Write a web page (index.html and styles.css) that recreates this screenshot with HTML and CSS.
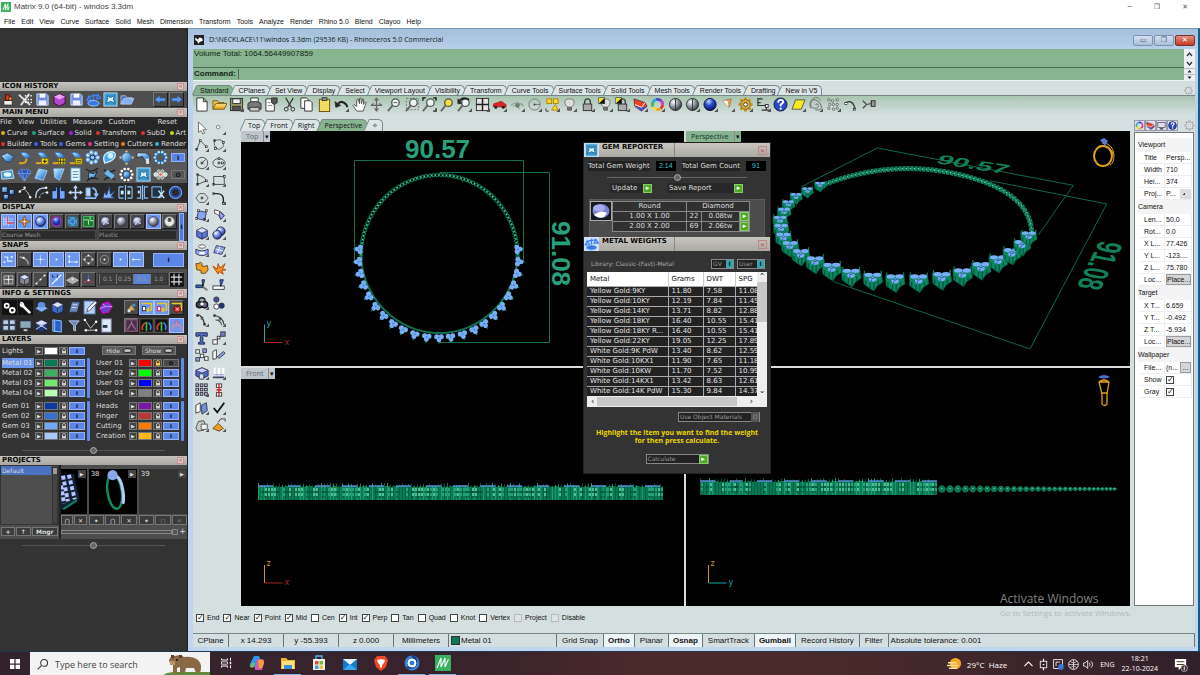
FILE: index.html
```html
<!DOCTYPE html>
<html lang="en">
<head>
<meta charset="utf-8">
<title>Matrix 9.0 (64-bit) - windos 3.3dm</title>
<link rel="stylesheet" href="styles.css">
</head>
<body>
<svg class="defs" aria-hidden="true">
  <defs>
    <radialGradient id="gb" cx=".35" cy=".3" r=".8"><stop offset="0" stop-color="#fff"/><stop offset=".4" stop-color="#7a9cf0"/><stop offset="1" stop-color="#0a1a70"/></radialGradient>
    <radialGradient id="gg" cx=".35" cy=".3" r=".8"><stop offset="0" stop-color="#fff"/><stop offset=".5" stop-color="#8a90a0"/><stop offset="1" stop-color="#222"/></radialGradient>
    <radialGradient id="gd" cx=".4" cy=".25" r=".8"><stop offset="0" stop-color="#c8d8ff"/><stop offset=".4" stop-color="#2c50d0"/><stop offset="1" stop-color="#000a50"/></radialGradient>
    <linearGradient id="gc" x1="0" y1="0" x2="1" y2="1"><stop offset="0" stop-color="#d8f0ff"/><stop offset=".5" stop-color="#6aaee8"/><stop offset="1" stop-color="#2458a0"/></linearGradient>
    <linearGradient id="gy" x1="0" y1="0" x2="0" y2="1"><stop offset="0" stop-color="#ffe890"/><stop offset="1" stop-color="#e0a010"/></linearGradient>
  </defs>
</svg>

<header class="app-title">
  <svg class="app-logo" viewBox="0 0 16 16"><rect width="16" height="16" fill="#3cae5c"/><path d="M3 13L7 3v10l4-10v10l2-5" fill="none" stroke="#fff" stroke-width="1.5"/></svg>
  <h1>Matrix 9.0 (64-bit) - windos 3.3dm</h1>
  <div class="win-controls"><button aria-label="Minimize">─</button><button aria-label="Restore">❐</button><button aria-label="Close">✕</button></div>
</header>
<nav class="menubar">
  <button>File</button><button>Edit</button><button>View</button><button>Curve</button><button>Surface</button><button>Solid</button><button>Mesh</button><button>Dimension</button><button>Transform</button><button>Tools</button><button>Analyze</button><button>Render</button><button>Rhino 5.0</button><button>Blend</button><button>Clayoo</button><button>Help</button>
</nav>

<main class="desktop">
  <aside class="matrix">
    <section>
      <h2>ICON HISTORY<button aria-label="Close Icon History">✕</button></h2>
      <div class="row history"><div class="icons" data-icons="stamp wrench2 floppy gembox floppy scale gemsheet folderb"></div><div class="icons arrows" data-icons="left+ right+"></div></div>
    </section>
    <section>
      <h2>MAIN MENU<button aria-label="Close Main Menu">✕</button></h2>
      <nav class="mm-menu"><button>File</button><button>View</button><button>Utilities</button><button>Measure</button><button>Custom</button><button>Reset</button></nav>
      <nav class="cats"><button class="c-gold">Curve</button><button class="c-teal">Surface</button><button class="c-purple">Solid</button><button class="c-red">Transform</button><button class="c-red">SubD</button><button class="c-lime">Art</button></nav>
      <nav class="cats"><button class="c-red">Builder</button><button class="c-blue">Tools</button><button class="c-blue">Gems</button><button class="c-pink">Setting</button><button class="c-orange">Cutters</button><button class="c-cyan">Render</button></nav>
      <div class="tool-block">
        <div class="row"><div class="icons spread" data-icons="disc swirl swirladd swirlhash swirllist gems pear gemc drill ring"></div><button class="tog">I</button></div>
        <div class="row"><div class="icons spread" data-icons="gemplate gemfacet plane plane2 sheet cup rail halo gemsheet cluster"></div><button class="tog off">O</button></div>
      </div>
      <div class="icons spread tool-dark" data-icons="boxes arcd bend mirror move rotate burst align align2 cutb torus"></div>
    </section>
    <section>
      <h2>DISPLAY<button aria-label="Close Display">✕</button></h2>
      <div class="display">
        <div>
          <div class="icons boxed" data-icons="grid! compass! ball! ballp+ swirlb+ circuit+"></div>
          <select aria-label="Mesh quality"><option>Coarse Mesh</option></select>
        </div>
        <div>
          <div class="icons boxed" data-icons="chk+ grayball+ chk+ grayball! silver+"></div>
          <select aria-label="Material"><option>Plastic</option></select>
        </div>
        <button class="tog tall">I</button>
      </div>
    </section>
    <section>
      <h2>SNAPS<button aria-label="Close Snaps">✕</button></h2>
      <div class="row snaps"><div class="icons boxed" data-icons="s1! s2+ s3! s4! s5! s6+ s7+ s4! s8!"></div><button class="tog wide">I</button></div>
      <div class="row snaps second"><div class="icons boxed" data-icons="window+ cube+ s9+"></div><div class="icons boxed" data-icons="deg! layer+ axes+"></div><div class="steps"><button>0.1</button><button>0.25</button><button class="on">0.5</button><button>1.0</button></div><div class="icons boxed" data-icons="hash+"></div></div>
    </section>
    <section>
      <h2>INFO &amp; SETTINGS<button aria-label="Close Info and Settings">✕</button></h2>
      <div class="row info"><div class="icons spread" data-icons="gears wrench platform cubeb scroll pencil hexp"></div><div class="icons boxed" data-icons="scene+ viewy! viewy2! viewx+"></div></div>
      <div class="row info"><div class="icons spread" data-icons="win4 monitor cage book funnel nodes notes"></div><div class="icons boxed" data-icons="g1+ g2 g2 g3!"></div></div>
    </section>
    <section>
      <h2>LAYERS<button aria-label="Close Layers">✕</button></h2>
      <div class="layers" id="layers"></div>
      <div class="grip"><span></span></div>
    </section>
    <section>
      <h2>PROJECTS<button aria-label="Close Projects">✕</button></h2>
      <div class="projects">
        <div class="plist"><div class="plist-box"><span>Default</span><i></i></div><div class="pbtns"><button>+</button><button>↑</button><button class="mngr">Mngr</button></div></div>
        <div class="thumbs">
          <div class="thumb-row">
            <figure class="cut"><div class="pic"><button aria-label="Open project 37">▶</button><svg viewBox="0 0 26 44"><path d="M0 6l13-2 6 26-13 10H0z" fill="#123"/><g stroke="#b8c4ff" stroke-width="4" stroke-dasharray="4 2"><path d="M2 6l5 26M8 5l6 25M0 16l3 18"/></g><path d="M2 40l14-9" stroke="#108060" stroke-width="2"/></svg></div><div class="tb"><button>⋂</button><button>✕</button></div></figure>
            <figure><div class="pic"><b>38</b><button aria-label="Open project 38">▶</button><svg viewBox="0 0 47 44"><ellipse cx="25" cy="22" rx="7" ry="17" fill="none" stroke="#118866" stroke-width="2.4" transform="rotate(-8 25 22)"/><path d="M21 7q8-3 11 9t1 18" fill="none" stroke="#b8c8f8" stroke-width="3"/><circle cx="23" cy="6" r="5" fill="#8aa8e8"/></svg></div><div class="tb"><button>✦</button><button>⋂</button><button>✕</button></div></figure>
            <figure><div class="pic empty"><b>39</b><button aria-label="Open project 39">▶</button></div><div class="tb"><button>✦</button><button class="dim">⋂</button><button class="dim">✕</button></div></figure>
          </div>
          <div class="slide"><i></i><button>+</button></div>
        </div>
      </div>
      <div class="grip"><span></span></div>
    </section>
  </aside>

  <section class="rhino">
    <header class="r-title">
      <svg viewBox="0 0 16 16"><rect width="16" height="16" fill="#222"/><path d="M2 4l4 3 3-3 4 1 1 4-5 2-2 3-2-4-3-2z" fill="#fff"/></svg>
      <h2>D:\NECKLACE\11\windos 3.3dm (29536 KB) - Rhinoceros 5.0 Commercial</h2>
      <div class="r-controls"><button aria-label="Minimize window">▭</button><button aria-label="Restore window">❐</button><button class="x" aria-label="Close window">✕</button></div>
    </header>
    <div class="command">
      <div class="cmd-body"><output>Volume Total: 1064.56449907859</output><label>Command:<input type="text" aria-label="Command"></label></div>
      <svg class="cmd-scroll" viewBox="0 0 11 31"><path d="M3 7l2.500-3L8 7M3 13l2.500 3L8 13" fill="none" stroke="#333" stroke-width="1.300"/><path d="M0 19.500h11M0 25.500h11" stroke="#bbb"/><path d="M3.500 23.500h4l-2-2.500zM3.500 27.500h4l-2 2.500z" fill="#222"/></svg>
    </div>
    <nav class="tabs"><button class="on">Standard</button><button>CPlanes</button><button>Set View</button><button>Display</button><button>Select</button><button>Viewport Layout</button><button>Visibility</button><button>Transform</button><button>Curve Tools</button><button>Surface Tools</button><button>Solid Tools</button><button>Mesh Tools</button><button>Render Tools</button><button>Drafting</button><button>New in V5</button><span class="gear" data-icons="cog"></span></nav>
    <div class="toolbar"><div class="icons" data-icons="new open save* print props cut copy paste undo* hand pan zoom zoomwin zoomext* zoomsel undoview* four* car* plan* circ* objs* bulb* lock* bulb2* lock2* wedge* wheel* sph sph* ballr* cone* gear* dim* help yellow* spiral* pts* curve fish"></div></div>
    <div class="work">
      <div class="strip icons" data-icons="cursor point* poly* spl* circle* ellipse* arc* rect* hexa* fillet* srf* srf2* boxt* sphs* cyl* patch* puzzle burstt trim split bool* dots ext* ext2* text ptsx* blocks flow bx* sub* array* gaug panels* check* solid2* render*"></div>
      <div class="view-col">
        <nav class="tabs vtabs"><button>Top</button><button>Front</button><button>Right</button><button class="on">Perspective</button><button>✧</button></nav>
        <div class="views">
          <div class="view"><div class="vlabel"><span>Top</span><button aria-label="Top view menu">▾</button></div><svg id="vTop" viewBox="241 131 443 235"></svg></div>
          <div class="view"><div class="vlabel on"><span>Perspective</span><button aria-label="Perspective view menu">▾</button></div><svg id="vPersp" viewBox="686 131 444 235"></svg></div>
          <div class="view"><div class="vlabel"><span>Front</span><button aria-label="Front view menu">▾</button></div><svg id="vFront" viewBox="241 367 443 238"></svg></div>
          <div class="view"><svg id="vRight" viewBox="686 367 444 238"></svg></div>

          <div class="floats">
            <section class="fw">
              <header><span class="fi" data-icons="gemsheet"></span><h3>GEM REPORTER</h3><button aria-label="Close Gem Reporter">✕</button></header>
              <div class="gem-body">
                <div class="totals"><span>Total Gem Weight</span><b>2.14</b><span>Total Gem Count</span><b>91</b></div>
                <div class="fgrip"><span></span></div>
                <div class="acts"><button>Update<i>▸</i></button><button>Save Report<i>▸</i></button></div>
                <div class="gem-card">
                  <svg viewBox="0 0 22 20"><rect x=".5" y=".5" width="21" height="19" fill="#181820" stroke="#aaa"/><ellipse cx="11" cy="10" rx="8.500" ry="7" fill="#7a84d0"/><ellipse cx="9" cy="7" rx="6" ry="3.500" fill="#a8acf0"/><path d="M4 14q7-6 13-2l-3 4q-5 2-10-2z" fill="#fff"/></svg>
                  <table><thead><tr><th>Round</th><th colspan="3">Diamond</th></tr></thead>
                  <tbody><tr><td>1.00 X 1.00</td><td>22</td><td>0.08tw</td><td class="go"><button aria-label="Show 1.00">▸</button></td></tr><tr><td>2.00 X 2.00</td><td>69</td><td>2.06tw</td><td class="go"><button aria-label="Show 2.00">▸</button></td></tr></tbody></table>
                </div>
              </div>
            </section>
            <section class="fw">
              <header><span class="fi" data-icons="scale"></span><h3>METAL WEIGHTS</h3><button aria-label="Close Metal Weights">✕</button></header>
              <div class="metal-body">
                <div class="lib"><span>Library: Classic-(Fast)-Metal</span><button>GV<i>I</i></button><button>User<i>I</i></button></div>
                <div class="mt-box">
                  <div class="mt-clip"><table class="mt"><thead><tr><th>Metal</th><th>Grams</th><th>DWT</th><th>SPG</th></tr></thead><tbody id="metals"></tbody></table></div>
                  <div class="vs"><span>⌃</span><i></i><span>⌄</span></div>
                  <div class="hs"><span>‹</span><i></i><span>›</span></div>
                </div>
                <button class="uom">Use Object Materials<i>O</i></button>
                <p>Highlight the item you want to find the weight<br>for then press calculate.</p>
                <button class="calc">Calculate<i>▸</i></button>
              </div>
            </section>
          </div>
        </div>
      </div>
      <aside class="side">
        <div class="side-tabs"><div class="icons" data-icons="wheel wedge screen help"></div><span class="gear" data-icons="cog"></span></div>
        <form class="props">
          <h4>Viewport</h4>
          <dl><dt>Title</dt><dd>Persp...</dd><dt>Width</dt><dd>710</dd><dt>Hei...</dt><dd>374</dd><dt>Proj...</dt><dd><select aria-label="Projection"><option>P...</option></select></dd></dl>
          <h4>Camera</h4>
          <dl><dt>Len...</dt><dd>50.0</dd><dt>Rot...</dt><dd>0.0</dd><dt>X L...</dt><dd>77.426</dd><dt>Y L...</dt><dd>-123....</dd><dt>Z L...</dt><dd>75.780</dd><dt>Loc...</dt><dd><button type="button">Place...</button></dd></dl>
          <h4>Target</h4>
          <dl><dt>X T...</dt><dd>6.659</dd><dt>Y T...</dt><dd>-0.492</dd><dt>Z T...</dt><dd>-5.934</dd><dt>Loc...</dt><dd><button type="button">Place...</button></dd></dl>
          <h4>Wallpaper</h4>
          <dl><dt>File...</dt><dd class="file">(n... <button type="button">...</button></dd><dt><label for="wshow">Show</label></dt><dd><input type="checkbox" id="wshow" checked></dd><dt><label for="wgray">Gray</label></dt><dd><input type="checkbox" id="wgray" checked></dd></dl>
        </form>
      </aside>
    </div>
    <div class="osnap">
      <label><input type="checkbox" checked>End</label><label><input type="checkbox" checked>Near</label><label><input type="checkbox" checked>Point</label><label><input type="checkbox" checked>Mid</label><label><input type="checkbox">Cen</label><label><input type="checkbox" checked>Int</label><label><input type="checkbox" checked>Perp</label><label><input type="checkbox">Tan</label><label><input type="checkbox">Quad</label><label><input type="checkbox">Knot</label><label><input type="checkbox">Vertex</label><label><input type="checkbox" disabled>Project</label><label><input type="checkbox" disabled>Disable</label>
    </div>
    <footer class="status">
      <button class="w35">CPlane</button><span class="w55">x 14.293</span><span class="w55">y -55.393</span><span class="w55">z 0.000</span><span class="w55">Millimeters</span><span class="lay"><i></i>Metal 01</span><button>Grid Snap</button><button class="on">Ortho</button><button>Planar</button><button class="on">Osnap</button><button>SmartTrack</button><button class="on">Gumball</button><button>Record History</button><button>Filter</button><span class="tol">Absolute tolerance: 0.001</span>
    </footer>
    <div class="watermark"><strong>Activate Windows</strong><span>Go to Settings to activate Windows.</span></div>
  </section>
</main>

<footer class="taskbar">
  <button class="start" aria-label="Start" data-icons="winlogo"></button>
  <label class="search"><span data-icons="mag"></span><input type="text" placeholder="Type here to search" aria-label="Search">
    <svg viewBox="0 0 48 24"><path d="M0 24q4-4 14-4h34v4z" fill="#5e8c3a"/><path d="M8 6q2-3 5-2 6-2 9 1 8-1 14 3 5 5 2 13h-4l-2-5h-8l-1 5h-5v-6l-3 1v5h-4v-8q-6-3-3-7z" fill="#8a6a44"/><path d="M9 3h3v3H9zM17 3h3v3h-3z" fill="#5a4028"/><path d="M8 9h5v4H8z" fill="#b89468"/><circle cx="15" cy="8" r="1" fill="#111"/></svg></label>
  <nav class="apps">
    <button aria-label="Task view" data-icons="taskview"></button><button aria-label="Copilot" data-icons="copilot"></button><button class="run" aria-label="File Explorer" data-icons="explorer"></button><button aria-label="Store" data-icons="store"></button><button aria-label="Mail" data-icons="mail"></button><button aria-label="Brave" data-icons="brave"></button><button class="run" aria-label="Browser" data-icons="eye"></button><button class="run" aria-label="Matrix" data-icons="matrix"></button>
  </nav>
  <div class="tray"><span class="weather" data-icons="sun"></span><span class="temp">29°C&nbsp; Haze</span><div class="icons" data-icons="up meet cam globe vol"></div><span class="lang">ENG</span><time>18:21<br>22-10-2024</time><span class="note" data-icons="note"></span></div>
</footer>
<script src="app.js"></script>
</body>
</html>
```
FILE: styles.css
```css
* { box-sizing: border-box; }
body { margin: 0; min-height: 100vh; display: flex; flex-direction: column; font: 7px/10px "Liberation Sans", Arial, sans-serif; color: #111; background: #fff; overflow: hidden; }
button, input, select { font: inherit; color: inherit; border: 0; padding: 0; margin: 0; background: none; border-radius: 0; }
button { white-space: nowrap; }
h1, h2, h3, h4, p, dl, dd, figure { margin: 0; font-size: inherit; font-weight: normal; }
svg { display: block; }
.defs { position: absolute; width: 0; height: 0; }
.icons { display: flex; align-items: center; }
.ib { display: block; flex: none; width: 15px; height: 15px; }
.ib svg { width: 100%; height: 100%; }

/* application frame */
.app-title { display: flex; align-items: center; height: 14px; background: #fff; }
.app-logo { width: 10px; height: 10px; margin: 0 3px 0 1px; }
.app-title h1 { flex: 1; font: 8px/12px "Liberation Sans", sans-serif; color: #444; }
.win-controls { display: flex; gap: 22px; padding-right: 12px; color: #555; font: 7px/12px "DejaVu Sans", sans-serif; }
.menubar { display: flex; gap: 6px; height: 14px; padding: 1px 4px 0; }
.desktop { flex: 1; display: flex; min-height: 0; }

/* left panel */
.matrix { width: 188px; flex: none; background: #333; padding-top: 54px; border-right: 1px solid #222; color: #ddd; font: 7px/10px "DejaVu Sans", Verdana, sans-serif; }
.matrix h2 { display: flex; justify-content: space-between; align-items: center; height: 9px; padding: 0 3px 0 2px; background: linear-gradient(#c4c3bd, #a8a7a2); color: #080808; font-weight: bold; line-height: 9px; }
.matrix h2 button { width: 7px; height: 7px; border: 1px solid #c89090; background: #d6cfcb; color: #c44; font: 5px/5px "DejaVu Sans", sans-serif; }
.row { display: flex; align-items: center; justify-content: space-between; }
.history { height: 17px; background: #4d4d4d; padding: 0 3px 0 1px; }
.history > .icons:first-child { gap: 2px; }
.arrows { gap: 1px; }
.matrix .plus { background: #4a4a4a; border: 1px solid #777; border-right-color: #1c1c1c; border-bottom-color: #1c1c1c; }
.matrix .act { background: #6d97ee; border: 1px solid #a8c0f8; }
.mm-menu { display: flex; gap: 6px; height: 10px; background: #262626; }
.mm-menu button:last-child { margin: 0 10px 0 auto; }
.cats { display: flex; justify-content: space-between; height: 11px; padding: 0 1px; background: #262626; }
.cats button { display: flex; align-items: center; gap: 2px; color: #ddd; }
.cats button::before { content: ""; width: 4px; height: 4px; border-radius: 50%; }
.cats .c-gold::before { background: #d8b020; } .cats .c-teal::before { background: #20a080; } .cats .c-purple::before { background: #a020e0; }
.cats .c-red::before { background: #e03030; } .cats .c-lime::before { background: #c0d820; } .cats .c-blue::before { background: #4060f0; }
.cats .c-pink::before { background: #e03090; } .cats .c-orange::before { background: #e88020; } .cats .c-cyan::before { background: #30b8d0; }
.tool-block { background: #585858; padding: 0 2px 0 0; }
.tool-block .row { height: 17px; gap: 3px; }
.spread { flex: 1; justify-content: space-between; }
.tool-dark { height: 18px; background: #2a2a2a; padding: 0 4px 0 1px; margin-bottom: 2px; }
.tog { width: 14px; height: 9px; background: #5b86e6; border: 1px solid #93b2f5; color: #112; font: bold 6px/6px "DejaVu Sans", sans-serif; }
.tog.off { background: #555; border-color: #777; }
.display { display: flex; gap: 2px; height: 29px; padding: 1px 3px 0 1px; background: #444; }
.display > div:first-child { width: 95px; }
.display > div:nth-child(2) { flex: 1; }
.boxed { gap: 1px; }
.display .icons { justify-content: space-between; height: 17px; background: #333; }
.matrix select { display: block; width: 100%; height: 10px; appearance: none; background: #2c2c2c; border: 1px solid #484848; color: #999; font: 6px/8px "DejaVu Sans", sans-serif; }
.tog.tall { width: 10px; height: auto; background: #4e7de0; }
.snaps { height: 19px; padding: 0 3px 0 1px; }
.tog.wide { width: 31px; height: 14px; }
.snaps.second { height: 20px; background: #4d4d4d; }
.steps { display: flex; color: #999; font-size: 6px; border: 1px solid #333; }
.steps button { width: 17px; height: 10px; border-left: 1px solid #777; background: #3c3c3c; }
.steps .on { background: #5a84d8; }
.info { height: 18px; background: #2b2b2b; padding-right: 3px; }
.info + .info { height: 19px; }
.info .spread { padding: 0 10px 0 2px; }
.info .boxed { gap: 0; background: #555; }
.layers { display: grid; grid-template-columns: 88px 88px; column-gap: 6px; padding: 2px 2px 0; }
.lgroup { display: flex; gap: 2px; margin-bottom: 3px; }
.lgroup::after { content: ""; width: 3px; background: #5d8be8; border-radius: 1px; }
.lgroup.bare { margin-bottom: 2px; }
.lgroup.bare::after { visibility: hidden; }
.lgroup > div { flex: 1; }
.lrow { display: grid; grid-template-columns: 1fr 8px 14px 9px 16px; gap: 1px; height: 10px; align-items: center; white-space: nowrap; }
.lrow.sel > span { background: #6d97ee; }
.lrow button, .lrow b { height: 8px; border: 1px solid #777; background: #444; font: 5px/6px "DejaVu Sans", sans-serif; }
.lrow .lk { display: grid; place-items: center; color: #ccc; }
.lrow .lk.held { color: #fc3; }
.lk svg { width: 6px; height: 6px; }
.lrow .tg { background: #5b86e6; border-color: #93b2f5; color: #001; font-weight: bold; }
.lrow .tg.off { background: #4a4a4a; border-color: #777; }
.hideshow { display: flex; justify-content: space-between; padding: 0 8px 0 6px; }
.hideshow button { display: flex; align-items: center; gap: 3px; width: 34px; height: 9px; justify-content: center; background: #5a5a5a; border: 1px solid #777; font-size: 6px; }
.hideshow i { width: 9px; height: 5px; border-radius: 50%; background: #bbb; border: 1px solid #222; }
.grip { height: 12px; display: flex; align-items: center; padding: 0 22px; }
.grip::before, .grip::after { content: ""; flex: 1; height: 1px; background: #555; }
.grip span, .fgrip span { width: 7px; height: 7px; border-radius: 50%; border: 1px solid #aaa; background: #666; }
.projects { display: flex; height: 74px; background: #4d4d4d; }
.plist { width: 61px; border-right: 2px solid #222; }
.plist-box { position: relative; height: 60px; border: 1px solid #333; font-size: 6px; line-height: 9px; padding-right: 7px; }
.plist-box span { display: block; background: #4a72c0; padding-left: 1px; }
.plist-box i { position: absolute; right: 0; top: 1px; width: 6px; height: 57px; border: 1px solid #333; background: linear-gradient(#999 0 6px, #444 6px); }
.pbtns { display: flex; gap: 1px; padding: 2px 1px; }
.pbtns button { flex: 1; height: 9px; border: 1px solid #777; background: #3c3c3c; font: bold 6px/7px "DejaVu Sans", sans-serif; }
.pbtns .mngr { flex: 2; }
.thumbs { flex: 1; min-width: 0; padding-top: 4px; }
.thumb-row { display: flex; gap: 2px; }
.thumb-row figure { flex: 47; min-width: 0; overflow: hidden; }
.thumb-row .cut { flex: 25; }
.pic { position: relative; height: 45px; background: #000; }
.pic.empty { background: #333; }
.pic svg { width: 100%; height: 100%; }
.pic b { position: absolute; left: 2px; top: 0; font-weight: normal; }
.pic button { position: absolute; right: 1px; top: 1px; z-index: 1; width: 8px; height: 8px; background: #444; font-size: 5px; line-height: 7px; }
.tb { display: flex; gap: 1px; margin-top: 1px; }
.tb button { flex: 1; height: 10px; border: 1px solid #777; background: #3a3a3a; font-size: 6px; line-height: 7px; }
.tb .dim { color: #777; }
.slide { display: flex; align-items: center; height: 14px; }
.slide::before { content: ""; flex: 1; height: 2px; border: 1px solid #888; }
.slide i { width: 6px; height: 6px; background: #555; border: 1px solid #888; }
.slide button { width: 9px; font-size: 8px; }

/* modelling window */
.rhino { position: relative; flex: 1; min-width: 0; display: flex; flex-direction: column; padding: 0 3px 4px 5px; background: linear-gradient(#a3bfda, #b9cfea 20px, #bfd6ee); border-right: 2px solid #145a86; border-top: 1px solid #7898b4; }
.r-title { display: flex; align-items: center; gap: 5px; height: 20px; padding-top: 2px; }
.r-title svg { width: 10px; height: 10px; margin-left: 1px; }
.r-title h2 { flex: 1; font: 7px/12px "Open Sans", "Liberation Sans", sans-serif; color: #122; }
.r-controls { display: flex; gap: 1px; }
.r-controls button { width: 20px; height: 11px; border: 1px solid #7d92b0; border-radius: 2px; background: linear-gradient(#d4e0f0, #a9bfdb); font: 7px/9px "DejaVu Sans", sans-serif; color: #456; }
.r-controls .x { background: linear-gradient(#dc9080, #c43a28); color: #fff; border-color: #803028; }
.command { display: flex; border-bottom: 1px solid #eef4f2; font-size: 8px; }
.cmd-body { flex: 1; background: #85b48f; color: #132418; }
.cmd-body output { display: block; height: 19px; border-bottom: 1px solid #4a6a52; padding-left: 1px; }
.cmd-body label { display: flex; align-items: center; height: 12px; padding-left: 1px; font-weight: bold; }
.cmd-body input { width: 90%; height: 10px; margin-left: 2px; border-left: 1px solid #566; font-weight: normal; }
.cmd-scroll { width: 11px; height: 31px; background: #f0f2f2; }
.tabs { display: flex; align-items: flex-end; height: 15px; background: #d5dfe0; border-bottom: 1px solid #788; padding: 0 2px; }
.tabs button { position: relative; height: 10px; padding: 0 4px; margin-left: 1px; border: 1px solid #788; border-width: 1px 1px 0 0; border-radius: 2px 5px 0 0; line-height: 9px; background: #dde5e6; }
.tabs button::before { content: ""; position: absolute; left: -2px; top: 0; bottom: 0; width: 4px; border-left: 1px solid #788; transform: skewX(-24deg); background: inherit; }
.tabs .on { background: #85b48f; }
.gear { margin-left: auto; color: #888; }
.gear .ib { width: 9px; height: 9px; }
.toolbar { height: 19px; background: linear-gradient(#a9c5b0, #d5dfe0); padding: 0 1px; }
.toolbar .icons { max-width: 682px; height: 17px; justify-content: space-between; }
.work { flex: 1; display: flex; min-height: 0; background: #d5dfe0; }
.strip { flex: none; width: 48px; height: 315px; margin-top: 4px; padding: 0 13px 0 0; display: grid; grid-template-columns: 17px 18px; grid-template-rows: repeat(18, 1fr); }
.strip .ib { width: 14px; height: 14px; margin: auto; }
.view-col { flex: 1; min-width: 0; display: flex; flex-direction: column; }
.vtabs { height: 16px; font-family: "Open Sans", "Liberation Sans", sans-serif; border: 0; }
.vtabs button { height: 12px; line-height: 11px; padding: 0 4px; }
.views { position: relative; flex: 1; min-height: 0; display: grid; grid-template-columns: 443fr 444fr; grid-template-rows: 235fr 238fr; gap: 2px; background: #dadada; }
.view { position: relative; min-width: 0; min-height: 0; background: #000; }
.view > svg { width: 100%; height: 100%; }
.vlabel { position: absolute; left: 0; top: 0; display: flex; height: 11px; background: #bfc6ca; color: #667; font: 7px/11px "Open Sans", sans-serif; }
.vlabel span { padding: 0 5px; }
.vlabel button { width: 7px; border-left: 1px solid #889; color: #112; }
.vlabel.on { background: #85b48f; color: #133; }

/* floating tool windows */
.floats { position: absolute; left: 342px; top: 11px; width: 188px; background: #333; color: #ddd; font: 7px/10px "DejaVu Sans", Verdana, sans-serif; border: 1px solid #222; }
.fw header { display: flex; height: 14px; background: linear-gradient(#c8c6bf, #aaa8a2); color: #090909; }
.fi { width: 15px; height: 14px; background: #cfe2f4; }
.fi .ib { height: 14px; }
.fw h3 { width: 76px; padding-left: 3px; margin-right: auto; border-right: 1px solid #888; font-weight: bold; line-height: 9px; white-space: nowrap; }
.fw header button { width: 9px; height: 9px; margin: 3px 3px; border: 1px solid #b88; color: #c44; font-size: 6px; line-height: 6px; }
.gem-body { padding-top: 4px; }
.totals { display: flex; justify-content: space-between; padding: 0 4px; }
.totals span, .totals b { background: #222; white-space: nowrap; }
.totals b { width: 20px; background: #000; color: #30c8c8; text-align: center; font: 7px/10px "Liberation Sans", sans-serif; }
.fgrip { display: flex; align-items: center; height: 12px; padding: 0 23px; }
.fgrip::before, .fgrip::after { content: ""; flex: 1; height: 1px; background: #666; }
.acts { display: flex; gap: 15px; padding: 0 27px 6px 26px; }
.acts button { display: flex; justify-content: space-between; align-items: center; background: #282828; height: 10px; padding-left: 2px; width: 42px; }
.acts button:last-child { flex: 1; }
.acts i, .calc i, .go button { width: 9px; height: 9px; background: #4fa828; border: 1px solid #8c6; color: #fff; font: 7px/7px "DejaVu Sans", sans-serif; }
.gem-card { display: flex; margin: 0 5px; padding: 1px 14px 5px 0; background: #4c4c4c; border: 1px solid #5a5a5a; border-bottom: 0; }
.gem-card svg { width: 22px; height: 20px; flex: none; }
.gem-card table { flex: 1; border-collapse: collapse; text-align: center; }
.gem-card th, .gem-card td { height: 10px; padding: 0; border: 1px solid #888; font-weight: normal; line-height: 9px; background: #303030; }
.gem-card th:first-child { width: 74px; }
.gem-card .go { width: 10px; }
.go button { display: block; }
.metal-body { padding: 7px 3px 6px; height: 222px; display: flex; flex-direction: column; align-items: center; }
.lib { width: 100%; display: flex; gap: 3px; height: 12px; padding: 0 2px 0 4px; color: #aaa; font-size: 6px; align-items: center; }
.lib span { margin-right: auto; }
.lib button, .uom, .calc { display: flex; justify-content: space-between; align-items: center; width: 23px; height: 10px; border: 1px solid #888; background: #222; padding-left: 1px; font-size: 6px; color: #999; flex: none; }
.lib button:last-child { width: 28px; }
.lib i { width: 7px; background: #30a8b0; color: #011; font: bold 6px/8px "DejaVu Sans", sans-serif; text-align: center; }
.mt-box { width: 180px; margin-top: 2px; display: grid; grid-template-columns: 1fr 10px; background: #eee; color: #222; }
.mt-clip { overflow: hidden; height: 124px; min-width: 0; }
.mt { width: 180px; table-layout: fixed; border-collapse: collapse; }
.mt th { height: 14px; background: #fff; color: #111; border-right: 1px solid #ccc; text-align: left; font-weight: normal; padding: 0 3px; width: 35px; }
.mt th:first-child { width: 81px; }
.mt th:nth-child(3) { width: 32px; }
.mt th:nth-child(4) { width: 32px; }
.mt td { height: 10px; padding: 0 0 0 3px; background: #222; color: #e4e4e4; border: 1px solid #aaa; border-left: 0; line-height: 8px; white-space: nowrap; }
.vs, .hs { display: flex; text-align: center; font-size: 8px; }
.vs { flex-direction: column; }
.vs i { height: 40px; margin: 0 0 auto; background: #c8c8c8; }
.hs { height: 11px; align-items: center; padding: 0 4px; gap: 3px; }
.hs i { flex: 1; height: 9px; background: #c8c8c8; margin-right: 10px; }
.uom { width: 82px; margin: 5px 7px 0 0; align-self: flex-end; flex: none; }
.uom i { width: 8px; background: #555; }
.metal-body p { margin: 7px 0 9px; text-align: center; color: #ecd800; font: bold 7px/8px "Open Sans", sans-serif; white-space: nowrap; }
.calc { width: 63px; }

/* properties */
.side { flex: none; width: 65px; padding: 4px 0 0 4px; display: flex; flex-direction: column; }
.side-tabs { display: flex; align-items: center; height: 13px; }
.side-tabs .ib { width: 11px; height: 11px; background: #dde; border: 1px solid #99a; }
.side-tabs .gear .ib { background: none; border: 0; }
.props { flex: 1; margin-right: 1px; background: #fff; border: 1px solid #777; padding: 5px 1px 0 3px; overflow: hidden; }
.props h4 { height: 14px; line-height: 14px; background: #f4f4f4; }
.props dl { display: grid; grid-template-columns: 26px 1fr; padding-left: 1px; }
.props dt, .props dd { height: 12px; line-height: 12px; border-bottom: 1px solid #eee; border-right: 1px solid #eee; white-space: nowrap; }
.props dt { padding-left: 5px; }
.props dd { padding-left: 1px; }
.props dd > button { width: 100%; height: 11px; background: #d6d6d6; border: 1px solid #999; line-height: 9px; text-align: left; display: block; }
.props .file { display: flex; justify-content: space-between; }
.props .file button { width: 11px; text-align: center; }
.props select { width: 100%; appearance: none; background: linear-gradient(135deg, transparent 55%, #444 55%) right 6px center / 3px 3px no-repeat, linear-gradient(#ddd, #ddd) right / 11px 10px no-repeat; height: 11px; display: block; }
input[type=checkbox] { appearance: none; width: 8px; height: 8px; border: 1px solid #444; background: #fff; flex: none; font: bold 8px/7px "DejaVu Sans", sans-serif; display: inline-block; vertical-align: middle; overflow: hidden; }
input[type=checkbox]:checked::before { content: "✓"; display: block; line-height: 6px; }
input[type=checkbox]:disabled { border-color: #bbb; background: #dde4e5; }

/* snap and status bars */
.osnap { display: flex; gap: 4px; height: 27px; padding: 0 3px 4px; align-items: center; background: #d5dfe0; }
.osnap label { display: flex; align-items: center; gap: 3px; }
.status { display: flex; height: 14px; background: #d5dfe0; border-top: 1px solid #788; font-size: 8px; line-height: 13px; text-align: center; }
.status > * { border-right: 1px solid #677; padding: 0 5px; white-space: nowrap; }
.status .w35 { width: 36px; padding: 0 3px; } .status .w55 { width: 55px; }
.status .lay { display: flex; align-items: center; gap: 1px; width: 108px; padding: 0 2px; }
.lay i { width: 9px; height: 9px; background: #0a7a54; border: 1px solid #333; }
.status .on { font-weight: bold; background: #eef3f6; padding: 0 4px; }
.status .tol { flex: 1; text-align: left; padding-left: 2px; }
.watermark { position: absolute; right: 48px; bottom: 31px; width: 150px; font-family: "Open Sans", sans-serif; color: #b0b8ba; pointer-events: none; }
.watermark strong { display: block; font: 12px/15px "Open Sans", sans-serif; color: #838383; }
.watermark span { font-size: 8px; line-height: 14px; white-space: nowrap; }

/* taskbar */
.taskbar { display: flex; height: 25px; flex: none; background: linear-gradient(90deg, #33232c, #38232b 40%, #4c2a2b 54%, #492a2b 70%, #30202a); color: #fff; font: 8px/11px "Open Sans", sans-serif; border-top: 1px solid #1b3850; }
.start { width: 30px; display: grid; place-items: center; }
.start .ib { width: 10px; height: 10px; }
.search { width: 180px; display: flex; align-items: center; background: #f3f3f4; color: #444; padding-left: 6px; }
.search .ib { width: 13px; height: 13px; }
.search input { flex: 1; min-width: 0; margin-left: 6px; font-size: 9px; }
.search input::placeholder { color: #444; opacity: 1; }
.search > svg { width: 48px; height: 24px; flex: none; }
.apps { display: flex; }
.apps button { width: 31px; display: grid; place-items: center; border-bottom: 2px solid transparent; }
.apps .run { border-image: linear-gradient(90deg, transparent 10%, #76b9ed 10% 90%, transparent 90%) 1; }
.apps .ib { width: 16px; height: 16px; }
.apps button:first-child .ib { width: 12px; height: 12px; }
.tray { margin-left: auto; display: flex; align-items: center; gap: 5px; padding-right: 12px; }
.tray .icons { gap: 2px; margin-left: 10px; }
.tray .icons .ib { width: 13px; height: 13px; }
.tray time { margin: 0 10px 0 2px; font-size: 7px; line-height: 10px; text-align: center; }
.tray .lang { font-size: 7px; }
```
FILE: app.js
```js
const P = (d, f = 'none', s = '#333', w = 1) => `<path d="${d}" fill="${f}" stroke="${s}" stroke-width="${w}"/>`;
const C = (x, y, r, f = 'none', s = '#333', w = 1) => `<circle cx="${x}" cy="${y}" r="${r}" fill="${f}" stroke="${s}" stroke-width="${w}"/>`;
const R = (x, y, w, h, f = 'none', s = '#333') => `<rect x="${x}" y="${y}" width="${w}" height="${h}" fill="${f}" stroke="${s}"/>`;
const hs = pts => pts.map(([x, y]) => `<rect x="${x - 1}" y="${y - 1}" width="2" height="2" fill="#fff" stroke="#222" stroke-width=".8"/>`).join('');
const dots = (pts, f = '#e8f8ff') => pts.map(([x, y]) => C(x, y, 1.3, f, 'none')).join('');
const B = '#8aa4f0', N = 'none';
const ringDots = (n, r, q, f) => Array.from({ length: n }, (_, i) => C(8 + r * Math.cos(i * 6.283 / n), 8 + r * Math.sin(i * 6.283 / n), q, f, N)).join('');

const magnifier = C(9, 6, 4, '#eef4f4', '#555', 1.4) + P('M6 9L1 15', N, '#666', 2);
const page = P('M3 1h7l4 4v10H3zM10 1v4h4', '#fff');
const padlock = P('M5 8V5q0-3 3-3t3 3v3', N, '#444', 1.5) + R(3.5, 7.5, 9, 7, '#aaa');
const lamp = P('M6 11q-3-3-3-5 0-4 5-4t5 4q0 2-3 5z', '#ddd', '#777') + P('M6 11h4v3H6z', '#777', '#555');
const swirl = P('M2 14q8 1 8-4T6 6', N, '#e0a820', 2) + P('M4 3q6-2 10 4-5 5-10-4z', 'url(#gc)', '#2c70c0');
const cube = c => P('M2 5l6-3 6 3v7l-6 3-6-3z', c, '#224') + P('M2 5l6 3 6-3M8 8v7', N, '#335') + P('M2 5l6-3 6 3-6 3z', '#d8e4ff', '#335', .5);
const pane = P('M2 3h12v8H9', N, '#e8c828', 2) + P('M11 8l-3 3 3 3', N, '#e8c828', 1.5);

const ICONS = {
  new: page,
  open: P('M1 13V4h5l1 2h6v2', '#f0c850', '#7a5a10') + P('M1 13l3-6h12l-3 6z', 'url(#gy)', '#7a5a10'),
  save: R(1.5, 1.5, 13, 13, '#98986a') + R(4, 2, 8, 5, '#f4f4f4') + R(4, 10, 8, 4.5, '#555'),
  print: P('M4 7V1h8v6', '#fff') + P('M1 7l3-2h8l3 2v6H1z', '#777') + P('M3 11h10v4H3z', '#ccc'),
  props: P('M2 2h9v13H2z', '#fff') + P('M8 1h6v5l-3 2-3-2z', '#555') + P('M4 6h3M4 9h5', N, '#888'),
  cut: P('M4 1l6 10M12 1L6 11', N, '#333', 1.3) + C(4.5, 13, 2) + C(11.5, 13, 2),
  copy: P('M2 1h6l2 2v9H2z', '#fff') + P('M6 4h6l2 2v9H6z', '#fff'),
  paste: R(2.5, 2.5, 11, 13, '#f4dc60', '#665510') + R(5.5, .8, 5, 3, '#999'),
  undo: P('M3 9q4-7 10-1 1 1 1 3', N, '#222', 2.2) + P('M1 5l1 6 5-2z', '#222'),
  hand: P('M5 15L1 9l1-1 3 2V3l1.500-1L8 7V1.500L9.500 1 10 7l1.500-5 1 .5L12 8l2-3 1 1-2 6-1 3z', '#fff', '#444', .9),
  pan: P('M8 1v14M2 9h12M8 1L6 4M8 1l2 3M8 15l-2-3M8 15l2-3M2 9l3-2M14 9l-3-2', N, '#666', 1.3),
  zoom: magnifier + P('M7 6h4', N, '#555'),
  zoomwin: '<rect x="1.500" y="1.500" width="13" height="12" fill="none" stroke="#777" stroke-dasharray="2 1.500"/>' + magnifier,
  zoomext: magnifier + P('M1 4V1h3M12 1h3v3M15 12v3h-3', N, '#111', 1.4),
  zoomsel: C(9, 6, 4, '#f5e040', '#555', 1.4) + P('M6 9L1 15', N, '#666', 2),
  undoview: magnifier + P('M2 5q4-6 11-2', N, '#222', 2) + P('M1 2v5h4z', '#222'),
  four: R(1.5, 1.5, 13, 13, '#e4e4e4') + P('M8 1v14M1 8h14', N, '#222', 1.6),
  car: P('M1 10l1-3 4-1 2-1h3l2 2 2 1v3z', '#d82828', '#900', .6) + C(4, 11, 1.6, '#222', N) + C(12, 11, 1.6, '#222', N),
  plan: P('M1 9q6-6 14 1M3 10l10-3M6 7l4 6', N, '#999', 1.1) + C(8, 9, 2, '#686', '#686'),
  circ: C(8, 8, 6, N, '#777') + P('M8 8h6', N, '#777') + C(8, 8, 1, '#333', N),
  objs: R(2, 2, 5, 5, '#ffd830', '#a80') + R(9, 2, 5, 5, '#ffd830', '#a80') + P('M7 14l4-6 3 6z', '#ffd830', '#a80') + P('M1 12v3h3', N, '#333'),
  bulb: lamp, bulb2: lamp + R(1, 1, 6, 6, '#111') + P('M1 1h6L1 7z', '#f8e030', N),
  lock: padlock, lock2: padlock + R(1, 1, 6, 6, '#111') + P('M1 1h6L1 7z', '#f8e030', N),
  wedge: P('M1 2l12 4 2 4-6 5-7-5z', '#f04020', '#333', .8) + P('M2 10l7 1 6-1-6 5z', '#4058c8', N) + P('M2 8l7 3 4-5', N, '#fff'),
  wheel: ['#e03030', '#f0a020', '#e8e040', '#40b850', '#30a8d8', '#4040d0', '#c040c0'].map((c, i) => `<circle cx="8" cy="8" r="5.500" fill="none" stroke="${c}" stroke-width="3" stroke-dasharray="5 30" transform="rotate(${i * 51.4} 8 8)"/>`).join(''),
  sph: C(8, 8, 6.5, 'url(#gg)') + P('M8 2v12', N, '#333'),
  ballr: C(7.5, 8, 6.5, 'url(#gd)', '#113'), ball: C(8, 8, 6, 'url(#gb)', '#113'),
  cone: P('M3 4l9-2-2 9z', '#f0a030', '#865', .7) + P('M3 4l5 0 1 6z', '#fff', N),
  gear: ringDots(8, 6, 1.8, '#c89820') + C(8, 8, 5, '#e0b030', '#764') + C(8, 8, 2, '#fff'),
  dim: P('M2 1v8h9v5M2 2h5M6 14h9M2 6h3', N, '#333', 1.2) + R(10, 8, 3, 3, '#fff'),
  help: C(8, 8, 7, '#2848c8', '#123') + P('M5.500 6q0-3 2.800-3 2.700 0 2.500 2.300Q10.500 7 8.200 8v2', N, '#fff', 2) + C(8.2, 12.4, 1.2, '#fff', N),
  yellow: P('M5 3h10l-4 10H1z', '#f8e820', '#555'),
  spiral: P('M8 8q2-2 3 1t-4 3-4-5 5-4 6 6-6 5', N, '#666') + P('M3 12Q0 6 5 2t9 2', N, '#777'),
  pts: [[3, 3], [7, 4], [12, 3], [4, 8], [8, 8], [12, 8], [3, 12], [8, 13], [12, 12]].map(([x, y]) => C(x, y, 1.3, '#ddd', '#555', .8)).join(''),
  curve: P('M2 7q8-6 11 6', N, '#333', 1.3) + hs([[3, 7], [12, 13]]),
  fish: P('M2 4l4 4-4 4M6 8l5-1M11 4v6', N, '#444', 1.2) + R(11, 4, 4, 6, '#999'),
  cog: ringDots(8, 6, 1.6, '#aaa') + C(8, 8, 5, '#eee', '#999') + C(8, 8, 2, '#fff', '#999'),
  screen: R(1.5, 2.5, 13, 9, '#dde', '#222') + P('M5 14h6', N, '#222', 2),
  cursor: P('M4 1l9 9-4 0 2 4-2 1-2-4-3 2z', '#fff', '#555', .9),
  point: C(7, 7, 2, '#fff', '#777'),
  poly: P('M2 13L6 3l7 7', N, '#444') + hs([[2, 13], [6, 3], [13, 10]]),
  spl: P('M3 3q9-3 10 3t-6 7q-6-4-4-10', N, '#555') + hs([[3, 3], [13, 5], [4, 12]]),
  circle: C(8, 8, 6.5, N, '#444') + P('M8 8l4-4', N, '#444') + hs([[8, 8]]),
  ellipse: '<ellipse cx="8" cy="8" rx="7" ry="5" fill="none" stroke="#444"/>' + hs([[8, 3], [8, 8], [12, 8]]),
  arc: P('M3 13V2q8 2 10 7z', N, '#444') + hs([[3, 2], [13, 9], [3, 13]]),
  rect: R(2, 4, 12, 9, N, '#444') + hs([[2, 13], [14, 4]]),
  hexa: P('M5 3h6l4 5-4 5H5L1 8z', N, '#555') + hs([[8, 8]]),
  fillet: P('M2 3h4q7 0 7 7v4', N, '#222', 1.6) + hs([[2, 3], [13, 14]]),
  srf: P('M4 3l9 2-2 9-9-2z', B, '#335') + hs([[4, 3], [13, 3], [2, 12], [11, 13]]),
  srf2: P('M3 2q9 2 11 7l-4 4Q8 7 3 6z', '#fff', '#444') + P('M9 4l5 5-4 4-2-5z', B, '#335'),
  boxt: cube('#5878d8'), cube: cube('#888'), cubeb: cube('#3868c8'), cage: cube('#203878') + P('M2 5l12 7M14 5L2 12', N, '#cdf'),
  sphs: C(10, 6, 5, 'url(#gb)', '#224') + C(6, 10, 5, 'url(#gb)', '#224'),
  cyl: P('M1 7q7 4 14 0v5q-7 5-14 0z', B, '#335') + '<ellipse cx="8" cy="4" rx="4" ry="2" fill="#fff" stroke="#555"/>' + P('M5 10h6v3H5z', '#fff', N),
  patch: P('M5 3l10 2-4 8-9-2z', B, '#335') + P('M4 7l9 2M9 4L6 12', N, '#fff'),
  puzzle: P('M1 3h4l1-2 2 2v3h3l3-1 1 5-3 4H7v-3l-5-1z', '#f0a020', '#542'),
  burstt: P('M7 15L1 6l5 3 1-6 2 5 6-5-3 6 4 1-5 1 2 4-5-3z', '#f89020', '#a40'),
  trim: P('M1 8h8v3H1zM8 2l3 0-2 9z', '#3868c8', '#222') + P('M9 10l5 4', N, '#777', 2),
  split: P('M1 9h13v4H1z', '#fff') + P('M9 2h4l-3 8z', '#3868c8', '#225'),
  bool: C(8, 5.5, 3.5, '#9ab', '#222', 1.5) + C(11, 10, 3.5, '#668', '#111', 1.5) + C(5, 10, 3.5, '#445', '#111', 1.5) + C(8, 9, 2, '#fff', N),
  dots: C(5, 4, 3, '#4050a0') + C(5, 12, 3, '#fff') + C(11, 11, 3, '#20307a'),
  ext: P('M2 2q6-1 9 11', N, '#333', 1.3) + hs([[3, 3], [8, 6], [11, 13]]),
  ext2: P('M2 3q10 0 12 11M4 8q6 0 7 6', N, '#444', 1.2) + hs([[3, 3], [9, 7]]),
  text: P('M1 2h13v4h-3v-1H9v8h2v2H4v-2h2V5H4v1H1z', '#5070c8', '#224'),
  ptsx: P('M4 12l8-8', N, '#555') + R(1, 10, 5, 5, '#fff') + R(10, 1, 5, 5, '#7080d0') + R(6, 6, 3, 3, '#fff'),
  blocks: [[1, 2], [9, 1], [6, 7], [1, 11], [11, 10]].map(([x, y], i) => R(x, y, 4, 4, i % 2 ? B : '#fff')).join(''),
  flow: P('M1 4l4-2v10l-4 1z', '#fff') + P('M6 10l7-6 2 2-7 6z', B),
  bx: P('M1 5l7-3 7 3v6l-7 4-7-4z', '#4a68c8', '#224') + P('M1 5l7 3 7-3-7-3z', '#c8d4ff', '#446') + P('M5 9h5v6H5z', '#d5dfe0', '#446'),
  sub: P('M1 13h13', N, '#446', 2) + P('M3 2v9M8 2v9M13 2v9', N, '#fff', 2.5) + P('M2 10h12', N, '#88c'),
  array: [1, 6, 11].map(x => [1, 6, 11].map(y => R(x, y, 3, 3, '#ccd', '#223')).join('')).join(''),
  gaug: R(5, 1, 6, 4, '#fff') + R(5, 11, 6, 4, '#fff') + P('M8 1v14M5 8h6', N, '#c22', 1.6),
  panels: P('M1 5l5-3v10l-5 2z', '#fff') + P('M7 5l6-3 1 9-6 4z', '#7090e0'),
  check: P('M2 8l4 5 8-11', N, '#111', 2),
  solid2: P('M1 11l3-7 6-1 3 8-3 3-7 1z', '#c8ccc8', '#444') + P('M7 7h7v6H7z', '#eee', '#555'),
  render: P('M1 12l6-6 6 6-5 3z', '#e8a020', '#642') + P('M7 5l3-4h5v3', '#ddd', '#333'),
  stamp: R(3, 9, 9, 5, '#eee') + P('M5 9V3h4v6z', '#e04020', '#400') + C(10, 7, 2, '#f08020'),
  wrench2: P('M1 3l12 11M12 2L3 14', N, '#ddd', 2) + [8, 11, 14].map(x => [4, 8, 11].map(y => C(x, y, .9, '#fff', N)).join('')).join(''),
  wrench: R(0, 0, 16, 16, '#111', N) + P('M2 2q4-1 5 4l7 7-2 2-7-7Q1 8 2 3l3 2z', '#fff', N),
  floppy: P('M2 2h10l2 2v10H2z', '#6a8ce0', '#cde') + R(5, 2, 6, 4, '#fff', N) + R(4, 9, 8, 5, '#eef', N),
  gembox: P('M2 5l6-3 6 3v7l-6 3-6-3z', '#b048d0', '#503') + P('M2 5l6 3 6-3-6-3z', '#e8a0f8', N),
  scale: P('M8 2v9M2 5l12-2M3 5l-2 4h5zM13 3l-2 4h5z', N, '#3c80f0', 1.5) + '<ellipse cx="8" cy="12" rx="6" ry="3" fill="#3c78e0" stroke="#9cf"/>',
  gemsheet: R(1, 1, 14, 14, '#3c98d0', '#bde') + P('M5 4l3 2 4-2-1 4 2 4-5-2-5 2 2-4z', '#d8f4ff', '#268'),
  folderb: P('M1 13V4h5l1 2h6v2H4z', '#4870c0', '#cde', .7) + P('M1 13l3-6h11l-3 6z', '#88b0f0', '#cde', .6),
  left: P('M1 8l6-5v3h7v4H7v3z', '#5a98f0', '#247', .5), right: P('M15 8L9 3v3H2v4h7v3z', '#5a98f0', '#247', .5),
  disc: P('M1 6l7-3 7 4-4 6-5-1z', 'url(#gc)', '#246'),
  swirl, swirladd: swirl + R(8, 9, 7, 6, '#f0e020', '#870') + P('M11.500 10v4M9.500 12h4', N, '#111'),
  swirlhash: swirl + R(8, 9, 7, 6, '#f0e020', '#870') + P('M10 9v6M13 9v6M8 12h7', N, '#111', .8),
  swirllist: swirl + R(8, 9, 7, 6, '#f0e020', '#870') + P('M9 11h5M9 13h5', N, '#111', .8),
  gems: C(8, 8, 2.5, '#8cc8f8', '#138') + ringDots(7, 5.5, 2.3, '#78b8f0') + ringDots(7, 5.5, 1, '#e8faff'),
  pear: P('M3 14Q-1 5 8 2q7-1 6 5-2 5-11 7z', '#48a8e8', '#cef', 1.4) + C(9, 6, 3, '#c8f0ff', N),
  gemc: ringDots(4, 6.3, 1.3, '#d8c090') + C(8, 8, 5, 'url(#gc)', '#37a'),
  drill: P('M1 3h9l5 3v5H9L7 7 1 8z', 'url(#gc)', '#333') + P('M10 9h4v6h-3z', '#ddd', N),
  ring: C(8, 8, 5, N, '#1c60a8', 3) + ringDots(10, 6, 1.4, '#a8e0ff'),
  gemplate: P('M1 5l12-2 2 9-13 1z', '#4898d0', '#bde') + '<ellipse cx="8" cy="8" rx="4" ry="2.500" fill="#e0f8ff"/>',
  gemfacet: P('M2 4l3-2 3 1 3-1 4 3-7 10-7-8z', '#2c54b8', '#68b') + P('M2 5l6 10 4-12M1 7h14M5 3l3 11', N, '#88a8e8', .7),
  plane: P('M5 2l9 2-4 10-9-2z', 'url(#gc)', '#9cf'), plane2: P('M3 2h11L9 14 4 11z', 'url(#gc)', '#9cf'),
  sheet: R(3, 1, 10, 14, '#e8f4ff', '#48a') + P('M5 5h6M5 8h6M5 11h6', N, '#48a'),
  cup: P('M4 6l5 1 4-3-3 8-6 1z', 'url(#gc)', '#123') + P('M1 2q5 5 13-1M2 15l5-4 7 2', N, '#222', 1.3),
  rail: P('M2 3q6 5 12 0M2 14q6-6 12 0', N, '#222', 1.5) + P('M4 5l8 6', N, '#68b8f0', 5),
  halo: C(8, 8, 3.5, 'url(#gc)', '#258') + ringDots(10, 6.2, 1.4, '#fff'),
  cluster: C(8, 8, 2, '#f06060', '#fff') + C(3, 8, 2, '#bdb', '#fff') + C(13, 8, 2, '#bdb', '#fff') + C(6, 4.5, 1.5, '#888', '#cdc') + C(10, 4.5, 1.5, '#888', '#cdc') + C(6, 11.5, 1.5, '#888', '#cdc') + C(10, 11.5, 1.5, '#888', '#cdc'),
  boxes: R(1, 2, 6, 6, 'url(#gc)', '#124') + R(9, 5, 5, 5, 'url(#gc)', '#124') + R(3, 10, 5, 5, 'url(#gc)', '#124'),
  arcd: P('M1 8q6-9 12 5', N, '#ccc') + dots([[2, 7], [7, 3], [13, 13]]),
  bend: P('M2 14Q1 3 13 3', N, '#b8c8e8', 1.5) + '<path d="M6 14q0-6 8-6" fill="none" stroke="#b8c8e8" stroke-dasharray="2 1"/>' + dots([[13, 3], [14, 8]]),
  mirror: P('M1 15V6h4V2h2v13zM9 15V2h2v4h4v9z', '#78a8f8', '#124'),
  move: P('M8 2v12M2 8h12', N, '#bcd8ff', 1.6) + P('M8 0L5.500 3.500h5zM8 16l-2.500-3.500h5zM0 8l3.500-2.500v5zM16 8l-3.500-2.500v5z', '#bcd8ff', N),
  rotate: P('M2 3h5v9H2z', '#b8d4ff', '#58a') + P('M9 3q5 1 4 8M11 9l2 3 2-3M1 14h12', N, '#8bf', 1.8),
  burst: P('M2 14l2-7 2 4 3-10 1 9 5-4-4 6 4 2z', '#8cb8ff', '#247'),
  align: P('M1 2h5M1 14h5M10 2h5M10 14h5M1 2v12M15 2v12M8 0v16', N, '#8cc0f8', 1.2) + R(3, 6, 3, 4, '#cef', N) + R(10, 6, 3, 4, '#cef', N),
  align2: P('M2 2h4v12H2M14 2h-4v12h4M8 0v16', N, '#8cc0f8', 1.2) + R(3, 6, 2, 3, '#cef', N),
  cutb: R(1, 2, 10, 11, '#234', '#9cf') + P('M8 6l6 8M14 6L8 14', N, '#cef', 1.5),
  torus: C(8, 8, 5.5, N, '#2a50b0', 3.5) + C(8, 8, 6.5, N, '#9cc8ff', .8),
  grid: P('M2 2v12M5 2v12M8 2v12M2 5h12M2 8h12M2 11h12', N, '#dce8ff', .8) + P('M7 2v8h8', N, '#e04050', 1.3),
  compass: P('M8 1l2 5 5 2-5 2-2 5-2-5-5-2 5-2z', '#f0b030', '#843') + C(8, 8, 2, '#fff', '#842'),
  ballp: C(8, 8, 5.5, 'url(#gd)', '#a030c0', 1.8),
  swirlb: P('M3 3h9M13 4v9M12 13H4M3 12V5', N, '#28a0d8', 1.8) + C(8, 8, 3.5, '#3c68d0', '#7df'),
  circuit: R(2, 2, 12, 12, '#1c7830', '#4c6') + P('M2 6h6v6M10 2v5h4', N, '#cfc'),
  chk: C(8, 8, 6, 'url(#gg)', '#225') + P('M4 5l4 3 3-4M5 12l3-4 4 3', N, '#c8d4f8', 1.3),
  grayball: C(8, 8, 6, 'url(#gg)', '#335'), silver: C(8, 8, 6, '#e4ece4', '#888') + C(8, 6, 2.5, '#555', N),
  s1: P('M3 5h4v5h6', N, '#def', 1.4) + dots([[3, 11], [12, 5]]),
  s2: P('M2 5q9 0 11 9', N, '#999', 2) + dots([[7, 6]]), s3: P('M8 2v12M2 8h12', N, '#bcd', 1) + dots([[8, 8]]),
  s4: dots([[8, 8]]), s5: P('M4 4v7h9', N, '#def') + dots([[4, 4], [4, 11], [13, 11]]),
  s6: C(8, 8, 4.5, N, '#999') + dots([[8, 3], [3, 8], [13, 8], [8, 13]]), s7: C(8, 8, 5, N, '#999') + dots([[8, 8]]),
  s8: P('M3 8h10', N, '#def') + dots([[4, 8]]), s9: P('M2 14L14 2', N, '#999') + dots([[3, 13], [8, 8], [13, 3]]),
  window: R(2.5, 3.5, 11, 10, '#666', '#bbb') + P('M8 3v11M2 8h12', N, '#ddd') + dots([[8, 8]]),
  deg: P('M2 14L14 2', N, '#fff', 1.4) + P('M3 2v3h3M9 2v4', N, '#036') + dots([[8, 8]]),
  layer: P('M1 9l7-4 7 4-7 4z', '#aaa', '#ddd') + dots([[8, 8]]), axes: P('M8 9l6 3M8 9l-6 3', N, '#c03850', 1.4) + P('M8 9V2', N, '#46d', 1.5) + dots([[8, 9]]),
  hash: R(0, 0, 16, 16, '#111', N) + P('M5 1v14M11 1v14M1 5h14M1 11h14', N, '#ddd', 1.4),
  gears: R(0, 0, 16, 16, '#111', N) + C(5, 6, 2.2, N, '#fff', 1.8) + C(11, 11, 2.5, N, '#fff', 2),
  platform: P('M1 9l7-5 7 5-7 4z', '#88b0f0', '#246') + '<ellipse cx="8" cy="5" rx="4" ry="3" fill="#5c90e0"/>',
  scroll: P('M5 2h9l-3 11H2z', '#6c88b8', '#234') + P('M6 5h5M5 8h5', N, '#dde'),
  pencil: R(1, 1, 12, 14, '#b8d0f8', '#469') + P('M4 13l1-4 8-8 2 2-8 8z', '#fff', '#456'),
  hexp: P('M4 4l6-2 4 5-4 6-6 1-3-5z', '#6c40c8', '#d0c', 1.2) + P('M1 9l6-2 7 0M7 7L4 4', N, '#c8a0f8'),
  scene: P('M2 12l6-8 5 8z', '#c8b060', '#544') + C(11, 5, 2, '#58c', N) + C(5, 12, 2, '#ddd', N),
  viewy: pane + R(3, 7, 4, 5, '#fff', '#224'), viewy2: pane + R(3, 7, 4, 5, '#fff', '#e04'), viewx: pane + C(9, 10, 4, '#d82828', '#600') + P('M7 8l4 4M11 8l-4 4', N, '#fff'),
  win4: [[1, 2], [8, 2], [1, 8], [8, 8]].map(([x, y]) => R(x, y, 6, 5, '#b8cce8', '#345')).join(''),
  monitor: R(2, 3, 12, 8, '#8ca8b8', '#223') + P('M6 13h4', N, '#ccc', 2),
  book: P('M3 2l9 1v12l-9-1z', '#2860c8', '#9cf') + P('M5 3v11', N, '#9cf'),
  funnel: P('M2 3h11l-4 5v6l-2-1V8z', '#7088c0', '#cde', .8),
  nodes: P('M2 2l6 9 6-7M3 13h11', N, '#ccc') + dots([[2, 2], [14, 4], [3, 13], [14, 13]], '#fff'),
  notes: R(3, 1, 10, 14, '#dde8f8', '#88a') + P('M4 9h5', N, '#234', 3),
  g1: R(1, 1, 14, 14, '#483048', '#b06090') + P('M3 13l5-8 5 8M8 5V2', N, '#a06888', 1.5),
  g2: R(1, 1, 14, 14, '#111', '#544') + P('M4 13q-2-5 3-8', N, '#e04030', 1.8) + P('M8 14V4', N, '#30c050', 1.8) + P('M12 13q2-5-2-8', N, '#4080f0', 1.8),
  g3: P('M3 14V8h10v6M8 8V3', N, '#d89', 1.6) + P('M5 5l3-3 3 3', N, '#e46'),
  winlogo: '<path d="M0 0h7v7H0zM9 0h7v7H9zM0 9h7v7H0zM9 9h7v7H9z" fill="#fff"/>',
  mag: C(10, 6, 4.2, N, '#333', 1.3) + P('M7 9l-5 5', N, '#333', 1.3),
  taskview: P('M2 2v2h8V2M2 14v-2h8v2M14 1v4M14 11v4', N, '#fff', 1.3) + R(2, 6.5, 8, 3, N, '#fff') + R(13, 6.5, 2, 3, '#fff', N),
  copilot: P('M5 1h5l2 5-3 6H3Q0 12 1 9z', '#2c9ae8', N) + P('M8 4h4q4 0 3 4l-2 7H7q-2 0-1-3z', '#d858a8', N) + P('M9 5h5l1 3-2 5h-3z', '#f0a040', N) + P('M3 8h3l-2 5-3-1z', '#6cc850', N),
  explorer: P('M1 14V3h5l2 2h7v9z', '#f0b830', N) + R(2, 6, 12, 8, '#ffe080', N) + R(4, 10, 8, 4, '#3890d8', N),
  store: R(2, 4, 12, 11, '#f0f0f0', N) + P('M5 4V1h6v3', N, '#58b8e8', 1.3) + R(4, 6, 3.5, 3.5, '#e84c3c', N) + R(8.5, 6, 3.5, 3.5, '#7cba3c', N) + R(4, 10.5, 3.5, 3.5, '#3c9ce8', N) + R(8.5, 10.5, 3.5, 3.5, '#f8c020', N),
  mail: P('M1 4h14v11H1z', '#1878c8', N) + P('M1 4l7 6 7-6z', '#e8f4ff', N) + P('M1 15l7-6 7 6z', '#38a8f0', N),
  brave: P('M4 1h8l3 4-2 7-5 4-5-4-2-7z', '#f04824', N) + P('M4 5l4-1 4 1-1 3-2 2 0 2-1 1-1-1 0-2-2-2z', '#fff', N),
  eye: C(8, 8, 7.5, '#3880d8', N) + P('M8 1q6 3 4 8-3 5-9 3', N, '#123c80', 2) + C(8, 8, 4, '#eaf4ff', '#fff') + C(8, 8, 2.3, '#2c78d8', N),
  matrix: R(0, 0, 16, 16, '#38b060', N) + P('M2 13L6 3v9l4-9v9l3-7 1 0', N, '#fff', 1.1),
  sun: C(9, 7, 6, '#f8a820', N) + P('M1 6h9M0 9h12M2 12h9', N, '#ffe0a0', 1.6),
  up: P('M3 10l5-5 5 5', N, '#fff', 1.3), meet: R(4, 4, 8, 8, N, '#fff') + P('M8 1v3M8 12v3M7 8h2', N, '#fff', 1.4),
  cam: R(2, 2, 11, 11, N, '#fff') + P('M5 10V5h5', N, '#fff') + C(11, 11, 3.5, '#3878d8', N),
  globe: C(8, 8, 6, N, '#fff') + P('M2 8h12M8 2v12M4 4q4 4 8 0M4 12q4-4 8 0', N, '#fff', .8),
  vol: P('M2 6h2l3-3v10l-3-3H2zM9 6q2 2 0 4M11 4q4 4 0 8', N, '#fff'),
  note: P('M2 2h12v9H9l-3 3v-3H2z', '#fff', N) + P('M4 5h8M4 8h8', N, '#432') + C(12, 12, 3.5, '#403038', '#bbb', .8) + P('M12 10v4', N, '#fff')
};

document.querySelectorAll('[data-icons]').forEach(box => {
  const inside = box.tagName === 'BUTTON' || box.tagName === 'SPAN';
  box.innerHTML = box.dataset.icons.split(' ').map(tok => {
    const name = tok.replace(/[*!+]/g, '');
    const cls = 'ib' + (tok.includes('!') ? ' act' : '') + (tok.includes('+') ? ' plus' : '');
    const tag = inside ? 'span' : 'button';
    return `<${tag} class="${cls}"${inside ? '' : ` aria-label="${name}"`}><svg viewBox="0 0 16 16">${ICONS[name] || ''}${tok.includes('*') ? '<path d="M16 12v4h-4z" fill="#555"/>' : ''}</svg></${tag}>`;
  }).join('');
});

/* layer list */
const lockSvg = '<svg viewBox="0 0 12 12"><path d="M3 6V4q0-3 3-3t3 3v2" fill="none" stroke="currentColor" stroke-width="1.600"/><path d="M2 6h8v5H2z" fill="currentColor"/></svg>';
const layerRow = ([n, c, f]) => `<div class="lrow${f === 'sel' ? ' sel' : ''}"><span>${n}</span><button aria-label="${n} menu">▶</button><b style="background:${c}"></b><button class="lk${f === 'off' ? ' held' : ''}" aria-label="Lock ${n}">${lockSvg}</button><button class="tg${f === 'off' ? ' off' : ''}" aria-label="Toggle ${n}">${f === 'off' ? 'O' : 'I'}</button></div>`;
const group = (rows, c = '') => `<div class="lgroup ${c}"><div>${rows.map(layerRow).join('')}</div></div>`;
document.getElementById('layers').innerHTML =
  group([['Lights', '#fff']], 'bare') +
  '<div class="hideshow"><button>Hide<i></i></button><button>Show<i></i></button></div>' +
  group([['Metal 01', '#0a7a54', 'sel'], ['Metal 02', '#3cb060'], ['Metal 03', '#70e868'], ['Metal 04', '#b8ffb0']]) +
  group([['User 01', '#f00', 'off'], ['User 02', '#0f0'], ['User 03', '#00f'], ['User 04', '#808080']]) +
  group([['Gem 01', '#0838a0'], ['Gem 02', '#3870d0'], ['Gem 03', '#70a8f8'], ['Gem 04', '#a8c8ff']]) +
  group([['Heads', '#7818a8'], ['Finger', '#b83838'], ['Cutting', '#ff7800'], ['Creation', '#ffb818']]);

document.getElementById('metals').innerHTML = [
  ['Yellow Gold:9KY', '11.80', '7.58', '11.08'], ['Yellow Gold:10KY', '12.19', '7.84', '11.45'], ['Yellow Gold:14KY', '13.71', '8.82', '12.88'],
  ['Yellow Gold:18KY', '16.40', '10.55', '15.41'], ['Yellow Gold:18KY R...', '16.40', '10.55', '15.41'], ['Yellow Gold:22KY', '19.05', '12.25', '17.89'],
  ['White Gold:9K PdW', '13.40', '8.62', '12.59'], ['White Gold:10KX1', '11.90', '7.65', '11.18'], ['White Gold:10KW', '11.70', '7.52', '10.99'],
  ['White Gold:14KX1', '13.42', '8.63', '12.61'], ['White Gold:14K PdW', '15.30', '9.84', '14.37']
].map(r => `<tr>${r.map(c => `<td>${c}</td>`).join('')}</tr>`).join('');

/* viewport drawings */
const G = '#0b8660', GD = '#118058', LB = '#78aef8';
const axis = (x, y, v, h, cv, ch) => `<path d="M${x} ${y - 18}v18" stroke="${cv}"/><path d="M${x} ${y}h18" stroke="${ch}"/><text x="${x + 2}" y="${y - 17}" fill="${cv}" font-size="8" font-family="DejaVu Sans">${v}</text><text x="${x + 20}" y="${y + 2}" fill="${ch}" font-size="8" font-family="DejaVu Sans">${h}</text>`;
const label = (t, tr, f = '#28a07c') => `<text transform="${tr}" font-family="Liberation Sans" font-weight="bold" font-size="26" fill="${f}">${t}</text>`;

let chain = '';
for (let a = 178; a <= 362; a += 2.7) {
  const r = a * Math.PI / 180, x = 439.3 + 78.3 * Math.cos(r), y = 255.5 + 80.5 * Math.sin(r);
  chain += `<g transform="translate(${x} ${y}) rotate(${a})"><path d="M-2-1.500L2 1.500M2-1.500L-2 1.500" stroke="${G}" stroke-width="1.200"/><circle r=".7" fill="#58c8a0"/></g>`;
}
const left = [[358, 403], [356, 440], [361, 476], [371, 511], [387, 544], [407, 575], [431, 602], [459, 626], [489, 644], [524, 658], [560, 666], [597, 668]];
const flowers = left.concat(left.slice(0, -1).map(([x, y]) => [1192 - x, y])).map(([x, y]) => {
  const px = 240 + x / 3, py = 115 + y / 3, a = Math.atan2(py - 255, px - 439) * 57.3 - 90;
  return `<g transform="translate(${px} ${py}) rotate(${a})" fill="${LB}"><path d="M0 3v3M-4-2v3M4-2v3" stroke="${G}" stroke-width="1.200"/><circle cx="-2.200" cy="-1" r="2.500"/><circle cx="2.200" cy="-1" r="2.500"/><circle cy="2.300" r="2.400"/><circle r=".8" fill="#3878c0"/></g>`;
}).join('');
document.getElementById('vTop').innerHTML = `<g fill="none" stroke="#127050"><path d="M354.500 262V160.500h169V262M439 172.500h110.500v170H439"/><path d="M360.800 252A78.500 81 0 0 0 517.800 252" stroke-width="2"/></g>${chain}${flowers}${label('90.57', 'translate(405 158)')}${label('91.08', 'translate(552 221) rotate(90)')}${axis(264.5, 342.5, 'y', 'x', '#2aa', '#a22')}`;

const gemPts = [[150, 165], [112, 182], [78, 200], [55, 222], [42, 245], [30, 270], [33, 295], [40, 322], [60, 348], [92, 373], [135, 395], [185, 415], [243, 433], [308, 445], [375, 450], [446, 450], [515, 443], [577, 432], [633, 413], [684, 392], [725, 370], [756, 345], [776, 318]];
const blocks = gemPts.map(([x, y]) => {
  const s = .55 + .4 * Math.min(1, Math.max(0, (y - 165) / 250));
  return `<g transform="translate(${x} ${y}) scale(${s})"><path d="M-30-14L28-14 32 12 14 24 4 40-12 30-28 18z" fill="${G}" stroke="#065c42" stroke-width="2"/><path d="M-22 6v14M-8 14v18M4 12v26M18 6v14" stroke="#04553c" stroke-width="4"/><path d="M-26-14v-10M27-14v-10" stroke="${G}" stroke-width="4"/><g fill="${LB}"><ellipse cx="-13" cy="-11" rx="13" ry="7"/><ellipse cx="14" cy="-11" rx="13" ry="7"/><ellipse cy="3" rx="12" ry="8"/></g><path d="M-8-4l8 5 9-5M-4 4v6" fill="none" stroke="#1c4c80" stroke-width="3"/></g>`;
}).join('');
document.getElementById('vPersp').innerHTML = `<g transform="translate(770 130) scale(.33333)"><g fill="none" stroke="#10684a" stroke-width="3"><path d="M95 170L322 54 910 166 805 315M660 152L1010 222 780 657 190 455"/></g><g fill="none" stroke-linecap="round"><path d="M152 168C300 108 440 105 560 132 690 160 780 215 785 305" stroke="${GD}" stroke-width="15" stroke-dasharray="10 2" stroke-linecap="butt"/><path d="M152 168C300 108 440 105 560 132 690 160 780 215 785 305" stroke="#60d0a8" stroke-width="5" stroke-dasharray="0 12"/></g>${blocks}</g>
${label('90.57', 'matrix(1.08 .17 -.34 .47 935 163)', '#12805c')}${label('91.08', 'matrix(-.36 .72 -1.300 -.24 1100 240)', '#12805c')}
<g fill="none" stroke="#e0a018"><ellipse cx="1103" cy="156" rx="9" ry="10" stroke-width="2"/><path d="M1099 146q12-2 15 10 0 7-4 9M1102 143q11 0 12 12"/></g><path d="M1100 140l4-2 4 3-3 5z" fill="#5878d8"/>`;

/* side elevations: prongs, bright facets and a broken line of stones along the top edge */
let seed = 7;
const rnd = () => (seed = (seed * 16807) % 2147483647) / 2147483647;
const strip = (x0, x1, y) => {
  let s = `<rect x="${x0}" y="${y + 3}" width="${x1 - x0}" height="14" fill="#077a54"/>`;
  for (let x = x0; x < x1; x += 3) {
    s += `<path d="M${x + .5} ${y + rnd() * 3}V${y + 17}" stroke="${rnd() > .5 ? '#1a9c70' : '#04603f'}"/>`;
    if (rnd() > .45) s += `<path d="M${x + 2} ${y + 5}v3M${x + 2} ${y + 10}v3" stroke="${rnd() > .5 ? '#78e0b4' : '#38b890'}" stroke-width="1.300"/>`;
    if (rnd() > .7) s += `<path d="M${x} ${y + 9}h3M${x} ${y + 14}h2" stroke="#02402a" stroke-width="1.200"/>`;
    if (Math.sin((x - x0) / 4.4) > -.1) s += `<path d="M${x} ${y + 3}h3" stroke="#5c90e0" stroke-width="1.400"/>`;
    else if (rnd() > .3) s += `<path d="M${x + 1.5} ${y}v4" stroke="#000" stroke-width="1.500"/>`;
  }
  return s;
};
document.getElementById('vFront').innerHTML = strip(258, 663, 482) + axis(264.5, 582, 'z', 'x', '#c8961c', '#a22');
let beads = '<path d="M938 488h179" stroke="#0a6f4e" stroke-width="1.500"/>';
for (let x = 942, w = 8; x < 1116; x += w, w *= .976) beads += `<ellipse cx="${x}" cy="488" rx="${w * .42}" ry="${w * .48}" fill="#0c7854"/><circle cx="${x}" cy="487.500" r=".8" fill="#5cc8a0"/>`;
document.getElementById('vRight').innerHTML = strip(700, 937, 477) + beads + axis(708.5, 582, 'z', 'y', '#c8961c', '#1aa') +
  '<path d="M1098 376q6-4 12 0-6 3-12 0z" fill="#4c70c8"/><g fill="none" stroke="#e0a018" stroke-width="1.300"><path d="M1099 381q5-4 10 0l-2 12v10q-3 3-5 0v-10zM1099 381h10M1101 392h6"/></g>';
```
